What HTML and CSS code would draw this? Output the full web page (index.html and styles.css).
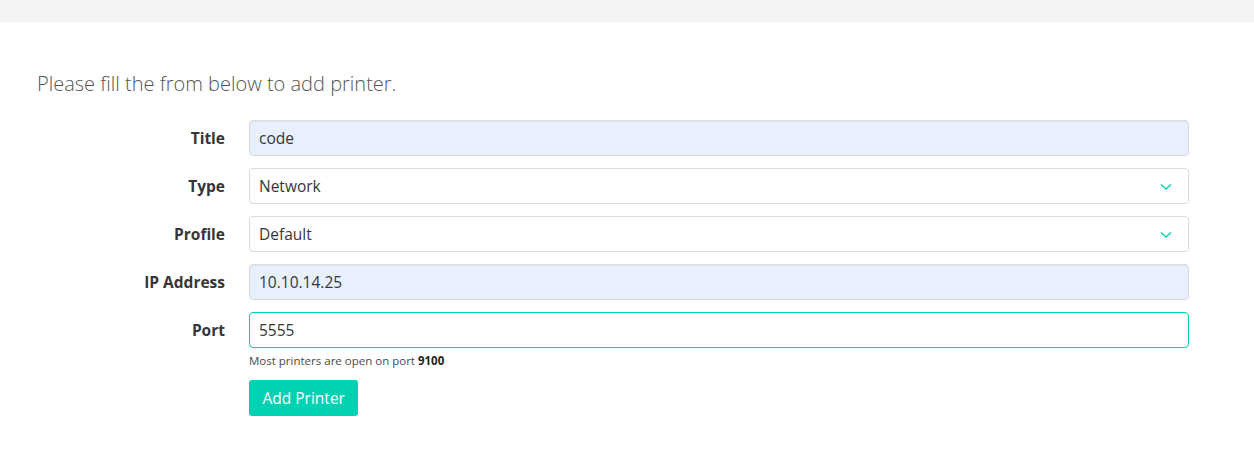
FILE: index.html
```html
<!DOCTYPE html>
<html>
<head>
<meta charset="utf-8">
<link rel="stylesheet" href="styles.css">
</head>
<body>
<div class="topbar"></div>
<main class="content">
  <p class="intro">Please fill the from below to add printer.</p>
  <form class="form">
    <label class="label">Title</label>
    <div class="control"><div class="input autofill">code</div></div>

    <label class="label">Type</label>
    <div class="control"><div class="input select">Network<svg class="chev" width="12" height="8" viewBox="0 0 12 8"><path d="M1 1.5 L6 6 L11 1.5" fill="none" stroke="#00d1b2" stroke-width="1.4"/></svg></div></div>

    <label class="label">Profile</label>
    <div class="control"><div class="input select">Default<svg class="chev" width="12" height="8" viewBox="0 0 12 8"><path d="M1 1.5 L6 6 L11 1.5" fill="none" stroke="#00d1b2" stroke-width="1.4"/></svg></div></div>

    <label class="label">IP Address</label>
    <div class="control"><div class="input autofill">10.10.14.25</div></div>

    <label class="label">Port</label>
    <div class="control">
      <div class="input focused">5555</div>
      <p class="help">Most printers are open on port <b>9100</b></p>
    </div>

    <div></div>
    <div class="control"><button type="button" class="button">Add Printer</button></div>
  </form>
</main>
</body>
</html>
```
FILE: styles.css
```css
html, body {
  margin: 0;
  padding: 0;
  background: #fff;
  font-family: "Open Sans", "Noto Sans", sans-serif;
  color: #4a4a4a;
}
.topbar {
  height: 22px;
  background: #f4f4f4;
}
.content {
  padding: 48px 66px 0 37px;
}
.intro {
  margin: 0 0 22px 0;
  font-size: 20px;
  font-weight: 300;
  color: #555;
  line-height: 28px;
}
.form {
  display: grid;
  grid-template-columns: 188px 940px;
  column-gap: 24px;
  row-gap: 12px;
  align-items: start;
}
.label {
  text-align: right;
  font-weight: 700;
  font-size: 15.5px;
  color: #363636;
  line-height: 36px;
}
.control {
  position: relative;
}
.input {
  box-sizing: border-box;
  height: 36px;
  border: 1px solid #dbdbdb;
  border-radius: 4px;
  padding: 0 10px 0 9px;
  font-size: 15.5px;
  line-height: 34px;
  color: #363636;
  background: #fff;
  box-shadow: inset 0 1px 2px rgba(10,10,10,0.05);
}
.autofill {
  background: #e8f0fe;
}
.focused {
  border-color: #00d1b2;
}
.select {
  position: relative;
  box-shadow: none;
}
.chev {
  position: absolute;
  right: 16px;
  top: 14px;
}
.help {
  margin: 5px 0 0 0;
  font-size: 11.5px;
  color: #4a4a4a;
  line-height: 16px;
}
.help b {
  color: #222;
}
.button {
  margin-top: -1px;
  height: 36px;
  padding: 0 13.5px;
  border: none;
  border-radius: 3px;
  background: #00d1b2;
  color: #fff;
  font-family: inherit;
  font-size: 15.5px;
}
```
